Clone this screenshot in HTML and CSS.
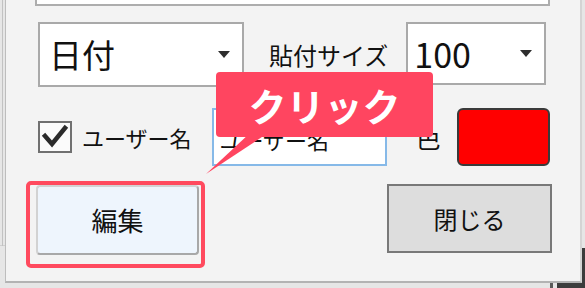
FILE: index.html
```html
<!DOCTYPE html>
<html lang="ja">
<head>
<meta charset="utf-8">
<title>貼付設定</title>
<link rel="stylesheet" href="styles.css">
</head>
<body>
<div class="window">
  <div class="top-field"></div>

  <div class="row row-first">
    <div class="combo combo-kind">
      <span class="combo-text">日付</span>
      <span class="arrow"></span>
    </div>
    <span class="label label-size">貼付サイズ</span>
    <div class="combo combo-size">
      <span class="combo-text">100</span>
      <span class="arrow"></span>
    </div>
  </div>

  <div class="row row-second">
    <div class="checkbox">
      <svg width="30" height="28" viewBox="0 0 30 28"><path d="M5 13 L12 21 L25 5" fill="none" stroke="#2b2b2b" stroke-width="4.5" stroke-linecap="square" stroke-linejoin="miter"/></svg>
    </div>
    <span class="label label-user">ユーザー名</span>
    <div class="textbox"><span>ユーザー名</span></div>
    <span class="label label-color">色</span>
    <div class="swatch"></div>
  </div>

  <div class="row row-third">
    <div class="btn btn-edit">編集</div>
    <div class="btn btn-close">閉じる</div>
  </div>

  <div class="highlight"></div>
  <div class="callout">
    <span class="callout-text">クリック</span>
    <svg class="callout-tail" width="62" height="42" viewBox="0 0 62 42"><polygon points="44,0 62,0 0,41" fill="#ff4560"/></svg>
  </div>
</div>
</body>
</html>
```

FILE: styles.css
```css
* { box-sizing: border-box; }

html, body {
  margin: 0;
  padding: 0;
}

body {
  width: 585px;
  height: 288px;
  overflow: hidden;
  font-family: "Noto Sans CJK JP", "Noto Sans", sans-serif;
  color: #111;
  background:
    linear-gradient(#c2c2c2, #c2c2c2) 2px 0 / 1px 246px no-repeat,
    linear-gradient(#cfcfcf, #cfcfcf) 0 245px / 5px 1px no-repeat,
    linear-gradient(#3c3c3c, #3c3c3c) 582px 248px / 3px 40px no-repeat,
    linear-gradient(#3c3c3c, #3c3c3c) 557px 283px / 28px 5px no-repeat,
    linear-gradient(#5a5a5a, #5a5a5a) 550px 283px / 3px 5px no-repeat,
    #e6e6e6;
}

.window {
  position: relative;
  margin-left: 5px;
  width: 577px;
  height: 283px;
  background: #f3f3f3;
  border-left: 1px solid #bdbdbd;
  border-right: 2px solid #d4d4d4;
  border-bottom: 2px solid #b3b3b3;
  padding-right: 28px;
}

.top-field {
  margin-left: 29px;
  width: 515px;
  height: 6px;
  background: #fff;
  border: 2px solid #adadad;
  border-top: none;
}

.row {
  display: flex;
  align-items: center;
}

.row-first {
  margin-top: 16px;
  align-items: flex-start;
}

.combo {
  display: flex;
  align-items: center;
  background: #fff;
  border: 2px solid #a9a9a9;
}

.combo-text {
  flex: 1;
  font-size: 33px;
  line-height: 1;
}

.arrow {
  width: 0;
  height: 0;
  border-left: 6px solid transparent;
  border-right: 6px solid transparent;
  border-top: 7px solid #2e2e2e;
}

.combo-kind {
  margin-left: 32px;
  width: 206px;
  height: 65px;
  padding: 0 12px 0 9px;
}

.combo-size {
  margin-left: 18px;
  width: 140px;
  height: 63px;
  padding: 0 12px 0 6px;
}

.combo-size .combo-text {
  font-size: 34px;
}

.label {
  line-height: 1;
  white-space: nowrap;
}

.label-size {
  align-self: center;
  margin-left: 25px;
  font-size: 24px;
}

.row-second {
  margin-top: 21px;
  height: 58px;
}

.checkbox {
  margin-left: 32px;
  width: 34px;
  height: 32px;
  border: 2px solid #707070;
  background: #fbfbfb;
  display: flex;
  align-items: center;
  justify-content: center;
}

.label-user {
  margin-left: 10px;
  font-size: 22px;
}

.textbox {
  margin-left: 20px;
  width: 175px;
  height: 58px;
  background: #fff;
  border: 2px solid #86b9e8;
  padding: 4px 0 0 6px;
  display: flex;
  align-items: center;
  font-size: 22px;
  line-height: 1;
}

.label-color {
  margin-left: 29px;
  font-size: 25px;
}

.swatch {
  margin-left: 16px;
  width: 93px;
  height: 58px;
  background: #ff0000;
  border: 2px solid #3a3a3a;
  border-radius: 6px;
}

.row-third {
  margin-top: 18px;
  align-items: flex-start;
}

.btn {
  display: flex;
  align-items: center;
  justify-content: center;
  line-height: 1;
}

.btn-edit {
  margin-left: 30px;
  margin-top: 1px;
  width: 163px;
  height: 70px;
  background: #eef5fd;
  border: 2px solid;
  border-color: #d2d2d2 #a8a8a8 #a8a8a8 #d2d2d2;
  border-radius: 4px;
  font-size: 26px;
}

.btn-close {
  margin-left: auto;
  width: 165px;
  height: 69px;
  background: #dddddd;
  border: 2px solid #787878;
  font-size: 24px;
}

.highlight {
  position: absolute;
  left: 20px;
  top: 181px;
  width: 179px;
  height: 87px;
  border: 4px solid #ff4a5e;
  border-radius: 5px;
}

.callout {
  position: absolute;
  left: 210px;
  top: 72px;
  width: 217px;
  height: 65px;
  background: #ff4560;
  border-radius: 4px;
  display: flex;
  align-items: center;
  justify-content: center;
}

.callout-text {
  color: #fff;
  font-size: 38px;
  font-weight: 700;
  line-height: 1;
}

.callout-tail {
  position: absolute;
  left: -10px;
  top: 61px;
}
```
